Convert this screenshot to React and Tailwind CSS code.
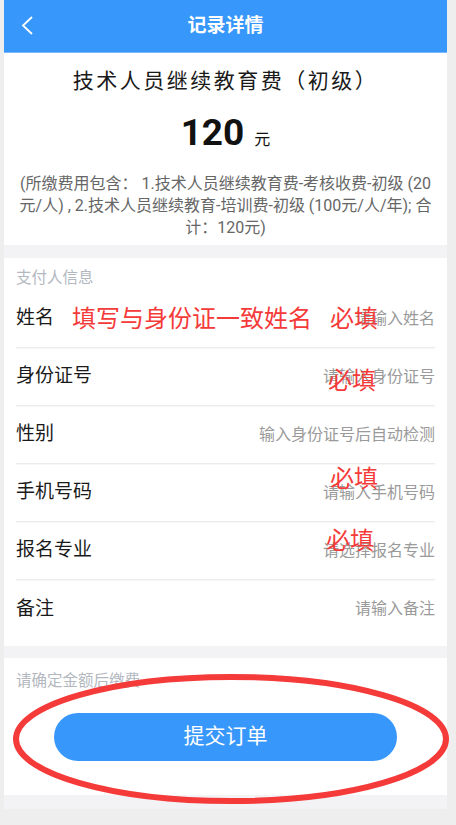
import React from "react";

const rows = [
  { label: "姓名", hint: "请输入姓名" },
  { label: "身份证号", hint: "请输入身份证号" },
  { label: "性别", hint: "输入身份证号后自动检测" },
  { label: "手机号码", hint: "请输入手机号码" },
  { label: "报名专业", hint: "请选择报名专业" },
  { label: "备注", hint: "请输入备注" },
];

// red handwritten-style marks laid over the form
const marks = [
  { text: "填写与身份证一致姓名", left: 72, top: 307 },
  { text: "必填", left: 330, top: 307 },
  { text: "必填", left: 328, top: 369 },
  { text: "必填", left: 330, top: 467 },
  { text: "必填", left: 326, top: 529 },
];

function App() {
  return (
    <div
      className="relative min-h-[825px] w-[456px] bg-[#eeeeee] pl-[4px] pr-[9px] pb-[17px]"
      style={{ fontFamily: 'Roboto, "Noto Sans CJK SC", sans-serif' }}
    >
      <div className="bg-white">
        {/* header */}
        <div className="relative flex h-[53px] items-center justify-center bg-[#3897fb] border-b border-[#7ab8fb]">
          <svg
            className="absolute left-[15px] top-[16px]"
            width="20"
            height="20"
            viewBox="0 0 20 20"
            fill="none"
            stroke="white"
            strokeWidth="1.8"
          >
            <polyline points="13,1 4,9.5 13,18" />
          </svg>
          <span className="text-[19px] font-bold text-white">记录详情</span>
        </div>

        {/* fee summary */}
        <div className="flex flex-col items-center px-[14px] pt-[14px] pb-[6px]">
          <p className="text-[21px] leading-[28px] tracking-[2.5px] text-[#1a1a1a] [text-spacing-trim:space-all]">
            技术人员继续教育费（初级）
          </p>
          <p className="mt-[16px] flex items-baseline text-[#111] leading-[44px]">
            <span className="text-[37px] font-bold">120</span>
            <span className="ml-[10px] text-[16px]">元</span>
          </p>
          <p className="mt-[11px] text-center text-[16px] leading-[22px] text-[#666]">
            (所缴费用包含： 1.技术人员继续教育费-考核收费-初级 (20元/人) , 2.技术人员继续教育-培训费-初级 (100元/人/年); 合计：120元)
          </p>
        </div>

        <div className="h-[13px] bg-[#f3f2f5]" />

        {/* payer info */}
        <div className="px-3 pb-[8px]">
          <p className="h-[32px] pt-[11px] text-[15.5px] leading-[18px] text-[#b3b8bf]">支付人信息</p>
          {rows.map((row, index) => (
            <div
              key={row.label}
              className={`flex h-[58px] items-center justify-between ${
                index < rows.length - 1 ? "border-b border-[#ececec] shadow-[0_1px_1px_rgba(0,0,0,0.03)]" : ""
              }`}
            >
              <span className="text-[19px] text-[#1a1a1a]">{row.label}</span>
              <span className="text-[16px] text-[#9a9a9a]">{row.hint}</span>
            </div>
          ))}
        </div>

        <div className="h-[12px] bg-[#f3f2f5]" />

        {/* submit */}
        <div className="px-3 pt-[14px] pb-[34px]">
          <p className="text-[15.5px] leading-[18px] text-[#b3b8bf]">请确定金额后缴费</p>
          <button className="mx-auto mt-[23px] flex h-[48px] w-[343px] items-center justify-center rounded-full bg-[#3897fb] text-[21px] text-white">
            提交订单
          </button>
        </div>

        <div className="h-[14px] bg-[#f3f2f5]" />
      </div>

      {/* annotation overlay */}
      {marks.map((m, i) => (
        <span
          key={i}
          className="absolute text-[24px] leading-none text-[#f53a3a]"
          style={{ left: m.left, top: m.top }}
        >
          {m.text}
        </span>
      ))}
      <svg className="pointer-events-none absolute left-0 top-[660px]" width="456" height="160">
        <ellipse cx="231" cy="79" rx="215" ry="62" fill="none" stroke="#f53a3a" strokeWidth="6" />
      </svg>
    </div>
  );
}

export default App;
